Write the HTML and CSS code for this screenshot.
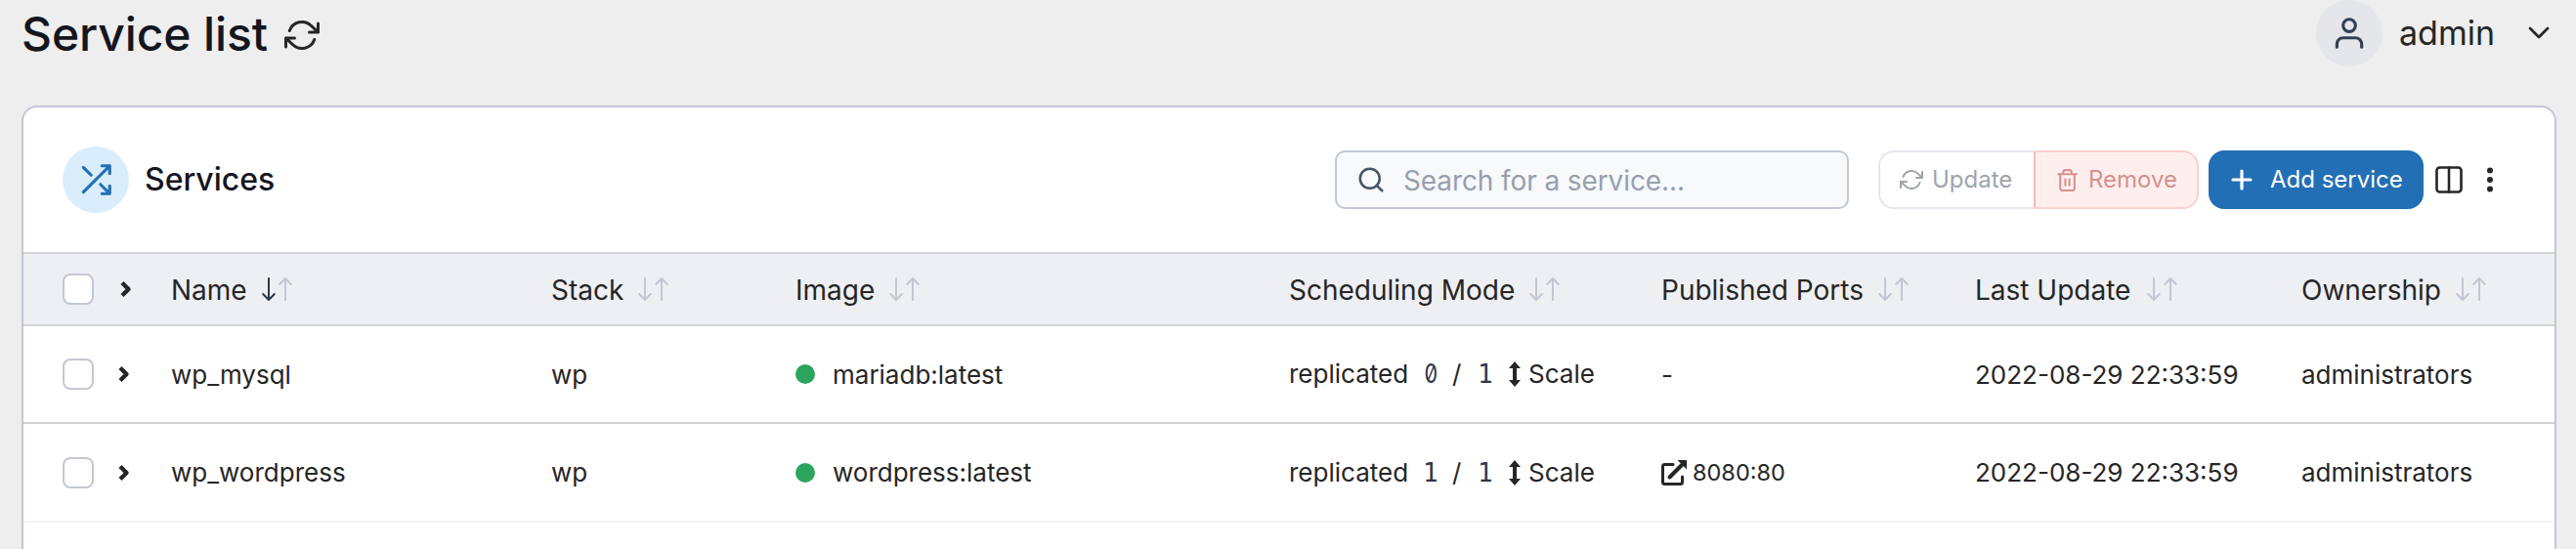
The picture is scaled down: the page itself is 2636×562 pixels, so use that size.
FILE: index.html
```html
<!DOCTYPE html>
<html lang="en">
<head>
<meta charset="utf-8">
<title>Service list</title>
<link rel="stylesheet" href="styles.css">
</head>
<body>
<svg class="sprite" aria-hidden="true">
  <symbol id="refresh" viewBox="0 0 24 24"><path d="M23 4v6h-6M1 20v-6h6M3.51 9a9 9 0 0 1 14.85-3.36L23 10M1 14l4.64 4.36A9 9 0 0 0 20.49 15"/></symbol>
  <symbol id="chev" viewBox="0 0 12 18"><path d="M2 2.500L8.500 9L2 15.500"/></symbol>
  <symbol id="down" viewBox="0 0 14 24"><path d="M7 1v22M1.200 17L7 23l5.800-6"/></symbol>
  <symbol id="up" viewBox="0 0 14 24"><path d="M7 23V1M1.200 7L7 1l5.800 6"/></symbol>
  <symbol id="scale" viewBox="0 0 12 26"><path d="M6 0l6 7H8v12h4l-6 7-6-7h4V7H0z"/></symbol>
</svg>
<header class="top">
  <h1 class="title">Service list</h1>
  <svg class="refresh"><use href="#refresh"/></svg>
  <div class="user">
    <span class="avatar"><svg viewBox="0 0 24 24"><path d="M20 21v-2a4 4 0 0 0-4-4H8a4 4 0 0 0-4 4v2"/><circle cx="12" cy="7" r="4"/></svg></span>
    <span class="user-name">admin</span>
    <svg class="user-chev" viewBox="0 0 22 14"><path d="M2 2l9 9 9-9"/></svg>
  </div>
</header>
<main class="card">
  <div class="toolbar">
    <span class="badge"><svg viewBox="0 0 24 24"><path d="M16 3h5v5M4 20L21 3M21 16v5h-5M15 15l6 6M4 4l5 5"/></svg></span>
    <h2 class="heading">Services</h2>
    <div class="search">
      <svg viewBox="0 0 24 24"><circle cx="11" cy="11" r="8"/><path d="M21 21l-4.350-4.350"/></svg>
      <span>Search for a service...</span>
    </div>
    <div class="group">
      <button class="btn update"><svg><use href="#refresh"/></svg><span>Update</span></button>
      <button class="btn remove"><svg viewBox="0 0 24 24"><path d="M3 6h18M19 6v14a2 2 0 0 1-2 2H7a2 2 0 0 1-2-2V6m3 0V4a2 2 0 0 1 2-2h4a2 2 0 0 1 2 2v2M10 11v6M14 11v6"/></svg><span>Remove</span></button>
    </div>
    <button class="btn add"><svg viewBox="0 0 24 24"><path d="M12 3v18M3 12h18"/></svg><span>Add service</span></button>
    <svg class="cols" viewBox="0 0 28 28"><rect x="1.500" y="1.500" width="25" height="25" rx="3"/><path d="M14 1.500v25"/></svg>
    <svg class="dots" viewBox="0 0 6 26"><circle cx="3" cy="3.500" r="3"/><circle cx="3" cy="13" r="3"/><circle cx="3" cy="22.500" r="3"/></svg>
  </div>
  <div class="row head">
    <div class="cell pick"><span class="check"></span><svg class="chev"><use href="#chev"/></svg></div>
    <div class="cell"><span class="th">Name</span><span class="sort asc"><svg><use href="#down"/></svg><svg><use href="#up"/></svg></span></div>
    <div class="cell"><span class="th">Stack</span><span class="sort"><svg><use href="#down"/></svg><svg><use href="#up"/></svg></span></div>
    <div class="cell"><span class="th">Image</span><span class="sort"><svg><use href="#down"/></svg><svg><use href="#up"/></svg></span></div>
    <div class="cell"><span class="th">Scheduling Mode</span><span class="sort"><svg><use href="#down"/></svg><svg><use href="#up"/></svg></span></div>
    <div class="cell"><span class="th">Published Ports</span><span class="sort"><svg><use href="#down"/></svg><svg><use href="#up"/></svg></span></div>
    <div class="cell"><span class="th">Last Update</span><span class="sort wide"><svg><use href="#down"/></svg><svg><use href="#up"/></svg></span></div>
    <div class="cell"><span class="th">Ownership</span><span class="sort"><svg><use href="#down"/></svg><svg><use href="#up"/></svg></span></div>
  </div>
  <div class="row">
    <div class="cell pick"><span class="check"></span><svg class="chev"><use href="#chev"/></svg></div>
    <div class="cell"><span class="td">wp_mysql</span></div>
    <div class="cell"><span class="td">wp</span></div>
    <div class="cell"><span class="dot"></span><span class="td">mariadb:latest</span></div>
    <div class="cell mode"><span class="kind">replicated</span><code class="zero">0</code><span class="slash">/</span><code>1</code><svg class="scale"><use href="#scale"/></svg><span>Scale</span></div>
    <div class="cell"><span class="td">-</span></div>
    <div class="cell"><span class="td">2022-08-29 22:33:59</span></div>
    <div class="cell"><span class="td">administrators</span></div>
  </div>
  <div class="row last">
    <div class="cell pick"><span class="check"></span><svg class="chev"><use href="#chev"/></svg></div>
    <div class="cell"><span class="td">wp_wordpress</span></div>
    <div class="cell"><span class="td">wp</span></div>
    <div class="cell"><span class="dot"></span><span class="td">wordpress:latest</span></div>
    <div class="cell mode"><span class="kind">replicated</span><code>1</code><span class="slash">/</span><code>1</code><svg class="scale"><use href="#scale"/></svg><span>Scale</span></div>
    <div class="cell port"><svg class="ext" viewBox="0 0 26 26"><path class="ext-box" d="M12 4.500H3.500a2 2 0 0 0-2 2v16a2 2 0 0 0 2 2h16a2 2 0 0 0 2-2V17"/><path class="ext-line" d="M8.500 17.500L21 5"/><path class="ext-tip" d="M16.500 0H26v9.500z"/></svg><span class="td">8080:80</span></div>
    <div class="cell"><span class="td">2022-08-29 22:33:59</span></div>
    <div class="cell"><span class="td">administrators</span></div>
  </div>
</main>
</body>
</html>
```

FILE: styles.css
```css
* { box-sizing: border-box; }
html, body { margin: 0; height: 562px; overflow: hidden; }
body {
  display: flex;
  flex-direction: column;
  background: #eeeeee;
  color: #262626;
  font: 26px/32px Inter, sans-serif;
}
svg { display: block; flex: none; fill: none; stroke: currentColor; stroke-width: 2; stroke-linecap: round; stroke-linejoin: round; overflow: visible; }
.sprite { position: absolute; width: 0; height: 0; }
h1, h2 { margin: 0; color: #14161f; font-weight: 500; white-space: nowrap; }

.top { display: flex; align-items: center; flex: none; height: 68px; padding: 0 27px 0 22px; }
.title { width: 269px; padding-top: 2px; font-size: 48px; line-height: 60px; letter-spacing: -0.1px; }
.refresh { width: 36px; height: 36px; margin-top: 4px; }
.user { display: flex; align-items: center; margin-left: auto; }
.avatar { display: flex; align-items: center; justify-content: center; width: 68px; height: 68px; border-radius: 50%; background: #e4e6ea; color: #344054; }
.avatar svg { width: 38px; height: 38px; }
.user-name { width: 132px; margin-left: 17px; font-size: 34px; line-height: 44px; }
.user-chev { width: 22px; height: 14px; stroke-width: 2.800; }

.card { flex: 1; min-height: 0; margin: 40px 20px 0 22px; border: 2px solid #c3c7d4; border-bottom: 0; border-radius: 16px 16px 0 0; background: #fff; }
.toolbar { display: flex; align-items: center; height: 148px; padding: 0 63px 0 40px; }
.badge { display: flex; align-items: center; justify-content: center; width: 68px; height: 68px; border-radius: 50%; background: #d9edfc; color: #236fb5; }
.badge svg { width: 38px; height: 38px; }
.heading { margin-left: 16px; font-size: 32px; line-height: 40px; }
.search { display: flex; align-items: center; width: 526px; height: 60px; margin: 0 30px 0 auto; padding-left: 20px; border: 2px solid #c3c7d4; border-radius: 10px; background: #f7f9fb; color: #989fae; font-size: 28px; }
.search span { padding-top: 2px; letter-spacing: -0.1px; }
.search svg { width: 30px; height: 30px; margin-right: 18px; color: #475467; }
.group { display: flex; margin-right: 10px; }
.btn { display: flex; align-items: center; height: 60px; margin: 0; padding: 0; border: 2px solid; font: 24px/32px Inter, sans-serif; white-space: nowrap; }
.update { width: 159px; padding-left: 20px; border-color: #e6e7ed; border-right: 0; border-radius: 16px 0 0 16px; background: #fff; color: #9fa3ab; }
.update svg { width: 24px; height: 24px; margin-right: 9px; }
.remove { width: 169px; padding-left: 20px; border-color: #fbcfcd; border-left-color: #f0bdbc; border-radius: 0 16px 16px 0; background: #feefee; color: #d6918f; }
.remove svg { width: 25px; height: 25px; margin-right: 9px; }
.add { width: 220px; padding-left: 20px; border-color: #236fb5; border-radius: 16px; background: #236fb5; color: #fff; }
.add svg { width: 24px; height: 24px; margin-right: 17px; stroke-width: 3.200; }
.cols { width: 28px; height: 28px; margin-left: 12px; stroke-width: 2.600; }
.dots { width: 6px; height: 26px; margin-left: 25px; fill: currentColor; stroke: none; }

.row { display: grid; grid-template-columns: 151px 389px 250px 505px 381px 321px 334px 1fr; height: 101px; border-top: 2px solid #d2d3d4; }
.row:nth-child(3) { height: 100px; }
.head { height: 74px; background: #eeeff3; }
.last { height: 103px; border-bottom: 2px solid #f1f1f1; }
.cell { display: flex; align-items: center; white-space: nowrap; }
.pick { padding-left: 40px; }
.check { width: 32px; height: 32px; border: 2px solid #c3c7d4; border-radius: 8px; background: #fff; }
.chev { width: 12px; height: 18px; margin-left: 25px; stroke-width: 4.400; stroke-linecap: butt; }
.head .chev { margin-left: 27px; }
.th { padding-top: 2px; font-size: 28px; }
.td { padding-top: 1px; }
.sort { display: flex; gap: 3px; margin-left: 15px; color: #c3c7d4; }
.wide { margin-left: 17px; }
.sort svg { width: 14px; height: 24px; }
.asc svg:first-child { color: #2d3748; }
.dot { width: 20px; height: 20px; margin: 0 18px 0 0; border-radius: 50%; background: #2ba55e; }
code { width: 16px; color: #2d3748; font: 26px/32px "DejaVu Sans Mono", monospace; }
.zero { font-family: Inter, sans-serif; font-size: 27px; font-feature-settings: "zero"; transform: scaleX(0.8); }
.kind { width: 137px; }
.slash { width: 26px; margin-left: 14px; }
.scale { width: 12px; height: 26px; margin: 0 8px 0 16px; fill: currentColor; stroke: none; }
.port { font-size: 23.500px; }
.ext { width: 26px; height: 26px; margin: 0 6px 0 0; stroke-width: 3; }
.ext-line { stroke-width: 4; }
.ext-tip { fill: currentColor; stroke: none; }
```
